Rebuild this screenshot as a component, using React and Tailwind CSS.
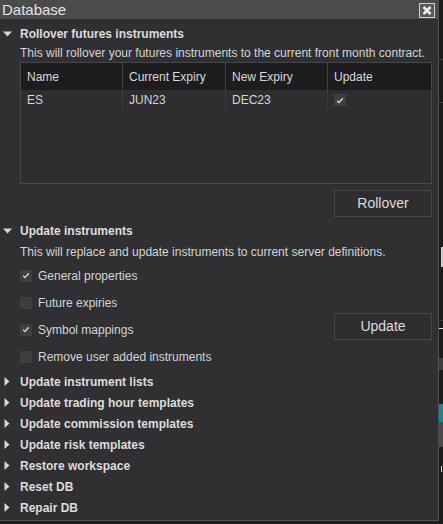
import React from "react";

const Down = () => (
  <svg width="9" height="6" viewBox="0 0 9 6" className="shrink-0">
    <polygon points="0,0.5 9,0.5 4.5,5.5" fill="#d6d6d6" />
  </svg>
);

const Right = () => (
  <svg width="6" height="9" viewBox="0 0 6 9" className="shrink-0">
    <polygon points="0.5,0 5.5,4.5 0.5,9" fill="#d6d6d6" />
  </svg>
);

const Check = ({ on }) => (
  <span className="w-[12px] h-[12px] bg-[#3e3e41] flex items-center justify-center shrink-0">
    {on && (
      <svg width="8" height="7" viewBox="0 0 8 7">
        <path d="M1.2 3.8 L3 5.5 L6.8 1.2" fill="none" stroke="#cfcfcf" strokeWidth="1.5" />
      </svg>
    )}
  </span>
);

function Header({ open, children }) {
  return (
    <div className="flex items-center h-[21px]">
      <div className={open ? "w-[20px] pl-[3px] flex" : "w-[20px] pl-[4px] flex"}>
        {open ? <Down /> : <Right />}
      </div>
      <span className="font-bold text-[12px] text-[#dcdcdc]">{children}</span>
    </div>
  );
}

const collapsed = [
  "Update instrument lists",
  "Update trading hour templates",
  "Update commission templates",
  "Update risk templates",
  "Restore workspace",
  "Reset DB",
  "Repair DB",
];

const options = [
  ["General properties", true],
  ["Future expiries", false],
  ["Symbol mappings", true],
  ["Remove user added instruments", false],
];

const cols = ["Name", "Current Expiry", "New Expiry", "Update"];

export default function App() {
  return (
    <div className="w-[443px] h-[524px] bg-[#1c1c1e] relative overflow-hidden font-['Liberation_Sans',Arial,sans-serif] text-[#d4d4d4]">
      <div className="w-[439px] h-[521px] bg-[#303033] border-r border-b border-[#505052] flex flex-col">
        <div className="h-[19px] bg-[#4b4b4c] flex items-center justify-between pl-[2px] pr-[3px] shrink-0">
          <span className="text-[15px] text-[#e2e2e2] leading-none">Database</span>
          <svg width="16" height="15" viewBox="0 0 16 15" className="mt-[1px]">
            <rect x="0.5" y="0.5" width="15" height="14" fill="#5a5a5a" stroke="#cfcfcf" />
            <path d="M4.5 4 L11.5 11 M11.5 4 L4.5 11" stroke="#ececec" strokeWidth="2.6" />
          </svg>
        </div>

        <div className="h-[4px]" />
        <Header open>Rollover futures instruments</Header>
        <div className="h-[18px] pl-[20px] text-[12px] flex items-center whitespace-nowrap">
          This will rollover your futures instruments to the current front month contract.
        </div>

        <div className="ml-[20px] w-[412px] h-[122px] border border-[#47474a] bg-[#2e2e31] shrink-0">
          <div className="grid grid-cols-[102px_103px_102px_103px] h-[27px] bg-[#1d1d1f]">
            {cols.map((c, i) => (
              <div
                key={c}
                className={`flex items-center pl-[6px] text-[12px] text-[#d8d8d8] ${i < 3 ? "border-r border-[#434346]" : ""}`}
              >
                {c}
              </div>
            ))}
          </div>
          <div className="grid grid-cols-[102px_103px_102px_103px] h-[20px] text-[12px]">
            <div className="flex items-center pl-[6px] border-r border-[#3a3a3d]">ES</div>
            <div className="flex items-center pl-[6px] border-r border-[#3a3a3d]">JUN23</div>
            <div className="flex items-center pl-[6px] border-r border-[#3a3a3d]">DEC23</div>
            <div className="flex items-center pl-[6px]">
              <Check on />
            </div>
          </div>
        </div>

        <div className="flex justify-end pr-[6px] mt-[6px]">
          <button className="w-[98px] h-[27px] border border-[#454548] bg-[#2e2e31] text-[14px] text-[#dcdcdc]">
            Rollover
          </button>
        </div>

        <div className="h-[3px]" />
        <Header open>Update instruments</Header>
        <div className="h-[21px] pl-[20px] text-[12px] flex items-center whitespace-nowrap">
          This will replace and update instruments to current server definitions.
        </div>

        <div className="flex items-start justify-between pr-[6px]">
          <div className="flex flex-col pl-[20px]">
            {options.map(([label, on]) => (
              <div key={label} className="h-[27px] flex items-center gap-[6px] text-[12px]">
                <Check on={on} />
                <span>{label}</span>
              </div>
            ))}
          </div>
          <button className="mt-[51px] w-[98px] h-[27px] border border-[#454548] bg-[#2e2e31] text-[14px] text-[#dcdcdc]">
            Update
          </button>
        </div>

        <div className="h-px" />
        {collapsed.map((t) => (
          <Header key={t}>{t}</Header>
        ))}
      </div>

      <div className="absolute left-[439px] top-[59px] w-[4px] h-px bg-[#3c3c3e]" />
      <div className="absolute left-[439px] top-[102px] w-[4px] h-px bg-[#3c3c3e]" />
      <div className="absolute left-[441px] top-[247px] w-[2px] h-[20px] bg-[#cfcfcf]" />
      <div className="absolute left-[439px] top-[320px] w-[4px] h-px bg-[#3c3c3e]" />
      <div className="absolute left-[439px] top-[328px] w-[4px] h-px bg-[#e0e0e0]" />
      <div className="absolute left-[439px] top-[358px] w-[4px] h-[12px] bg-[#3d3d3f]" />
      <div className="absolute left-[439px] top-[404px] w-[4px] h-[18px] bg-[#0b8a9a]" />
      <div className="absolute left-[439px] top-[422px] w-[4px] h-[25px] bg-[#4a4a4c]" />
      <div className="absolute left-[441px] top-[466px] w-[1px] h-[6px] bg-[#d0d0d0]" />
    </div>
  );
}
